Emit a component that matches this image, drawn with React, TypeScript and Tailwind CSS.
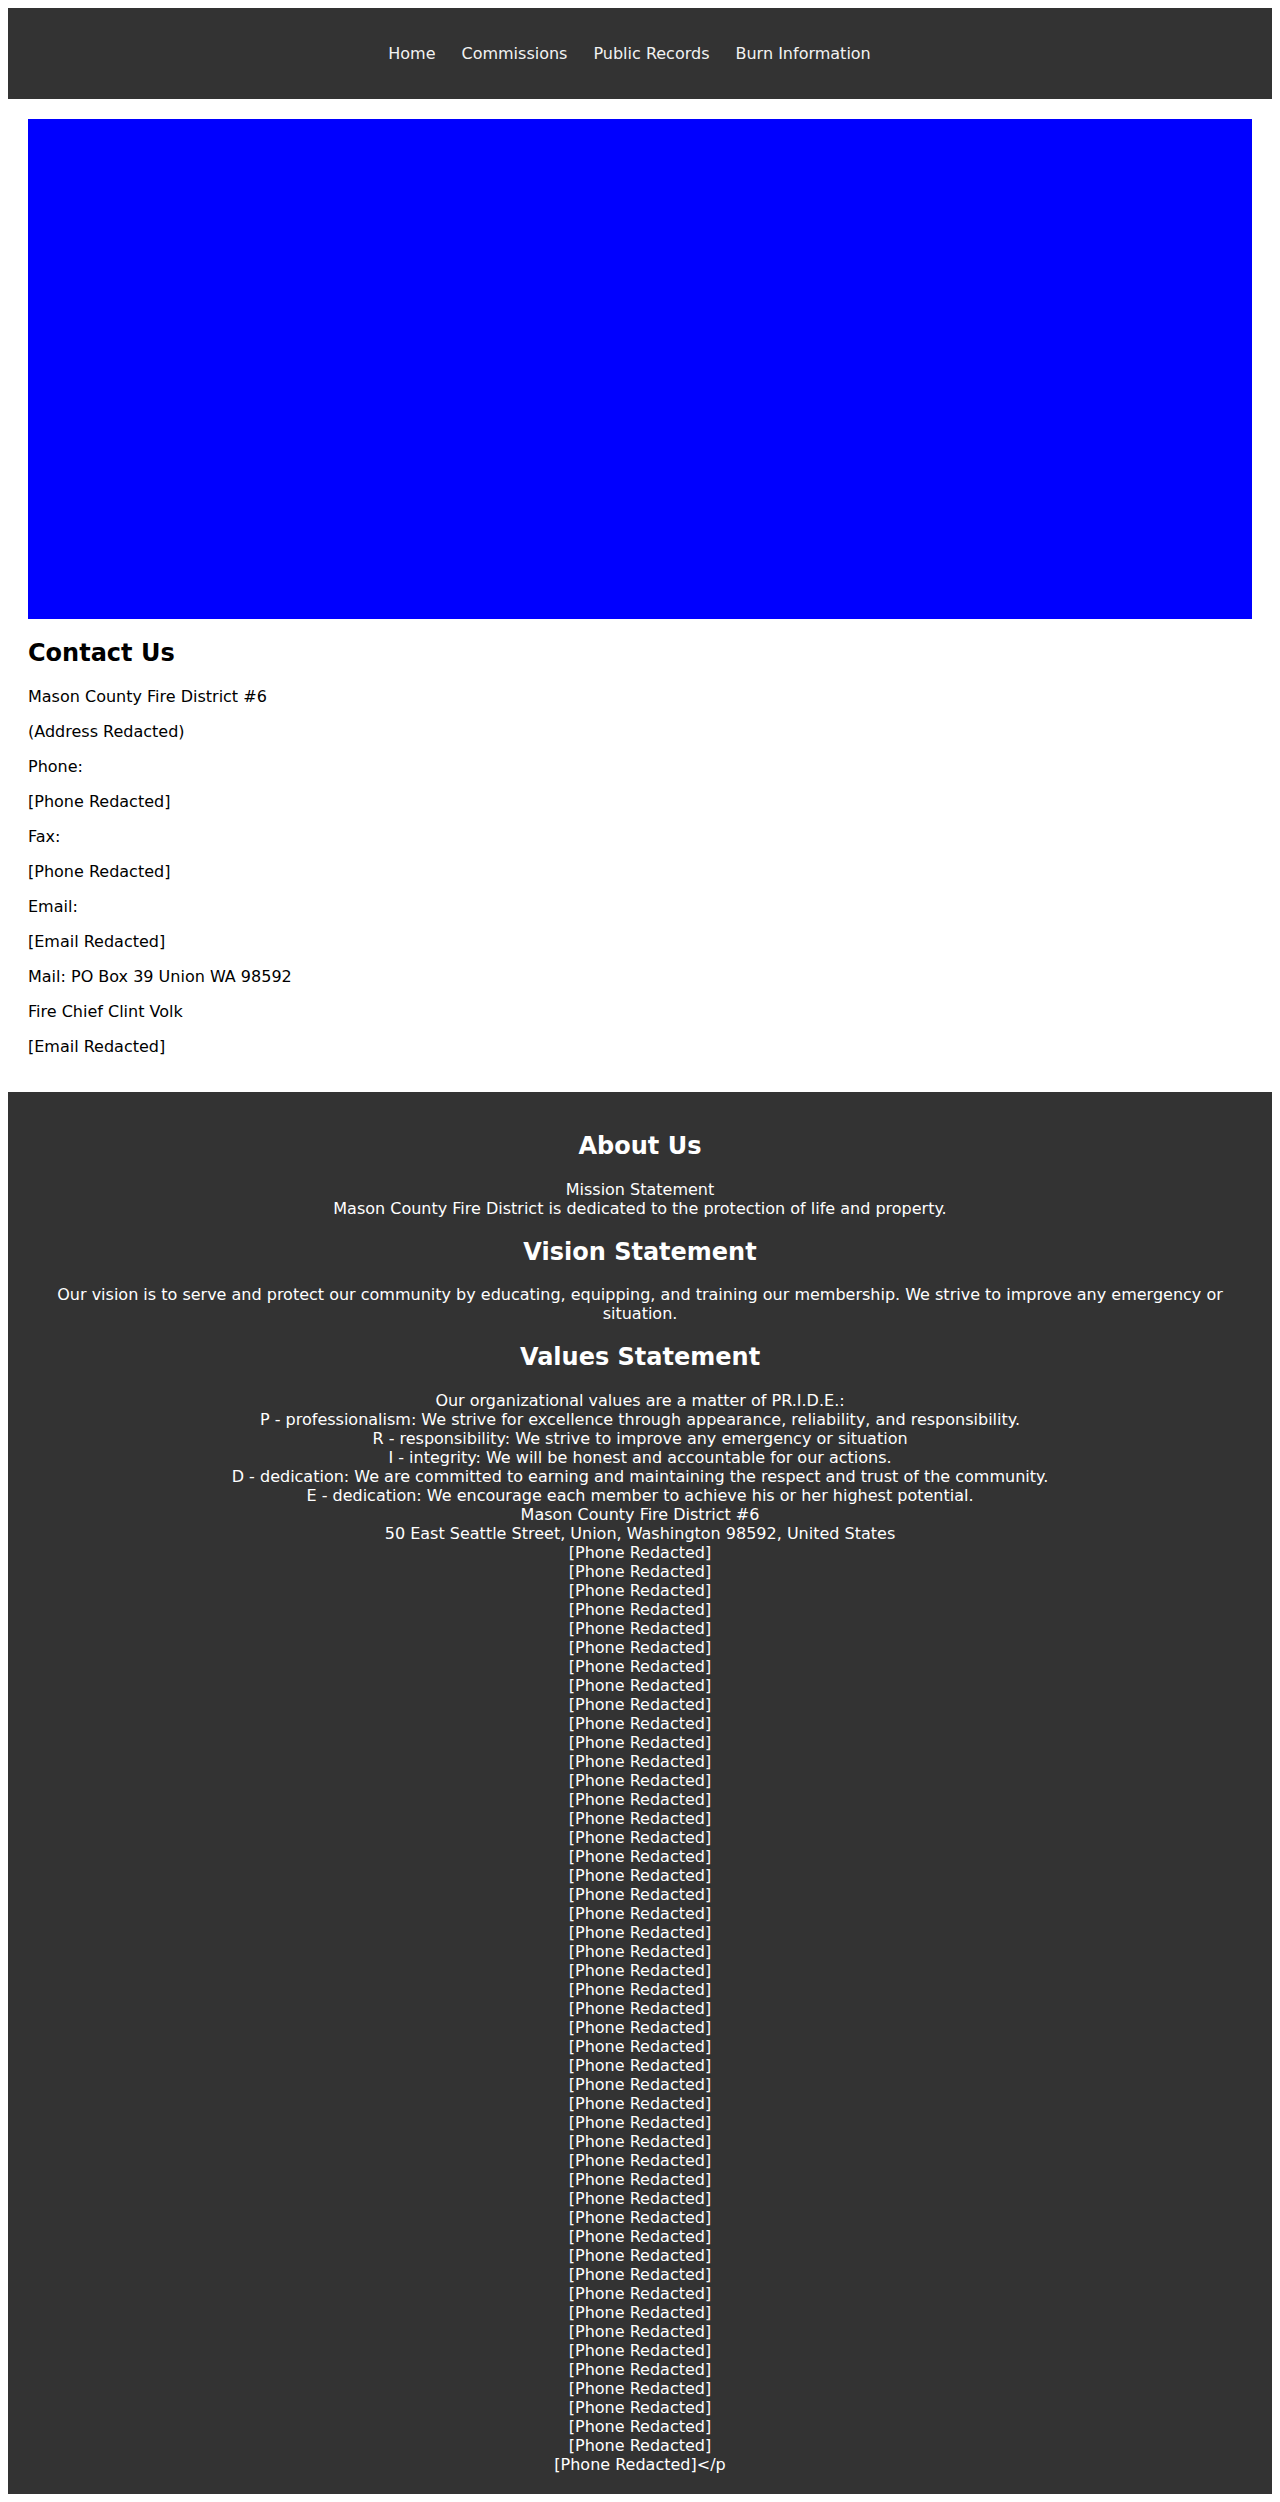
const links = ["Home", "Commissions", "Public Records", "Burn Information"];

const contact = [
  "Mason County Fire District #6",
  "(Address Redacted)",
  "Phone:",
  "[Phone Redacted]",
  "Fax:",
  "[Phone Redacted]",
  "Email:",
  "[Email Redacted]",
  "Mail: PO Box 39 Union WA 98592",
  "Fire Chief Clint Volk",
  "[Email Redacted]",
];

const values = [
  "Our organizational values are a matter of PR.I.D.E.:",
  "P - professionalism: We strive for excellence through appearance, reliability, and responsibility.",
  "R - responsibility: We strive to improve any emergency or situation",
  "I - integrity: We will be honest and accountable for our actions.",
  "D - dedication: We are committed to earning and maintaining the respect and trust of the community.",
  "E - dedication: We encourage each member to achieve his or her highest potential.",
  "Mason County Fire District #6",
  "50 East Seattle Street, Union, Washington 98592, United States",
  ...Array.from({ length: 48 }, () => "[Phone Redacted]"),
  "[Phone Redacted]</p",
];

function Heading({ children }: { children: string }) {
  return <h2 className="my-[0.83em] text-2xl font-bold leading-[28px]">{children}</h2>;
}

export default function App() {
  return (
    <div className="m-2 font-['DejaVu_Sans',sans-serif] text-base leading-[19px] text-black">
      <header className="bg-[#333] p-5">
        <nav className="my-4 flex justify-center gap-[26px] pr-[21px]">
          {links.map((l) => (
            <a key={l} href="#" className="text-[#f2f2f2]">
              {l}
            </a>
          ))}
        </nav>
      </header>

      <main className="p-5">
        <div className="h-[500px] w-full bg-[#0000ff]" />
        <Heading>Contact Us</Heading>
        {contact.map((line, i) => (
          <p key={i} className="my-4">
            {line}
          </p>
        ))}
      </main>

      <footer className="bg-[#333] p-5 text-center text-white">
        <Heading>About Us</Heading>
        <p className="my-4">
          Mission Statement
          <br />
          Mason County Fire District is dedicated to the protection of life and property.
        </p>
        <Heading>Vision Statement</Heading>
        <p className="my-4">
          Our vision is to serve and protect our community by educating, equipping, and training our
          membership. We strive to improve any emergency or situation.
        </p>
        <Heading>Values Statement</Heading>
        <p className="mt-4">
          {values.map((v, i) => (
            <span key={i}>
              {v}
              {i < values.length - 1 && <br />}
            </span>
          ))}
        </p>
      </footer>
    </div>
  );
}
